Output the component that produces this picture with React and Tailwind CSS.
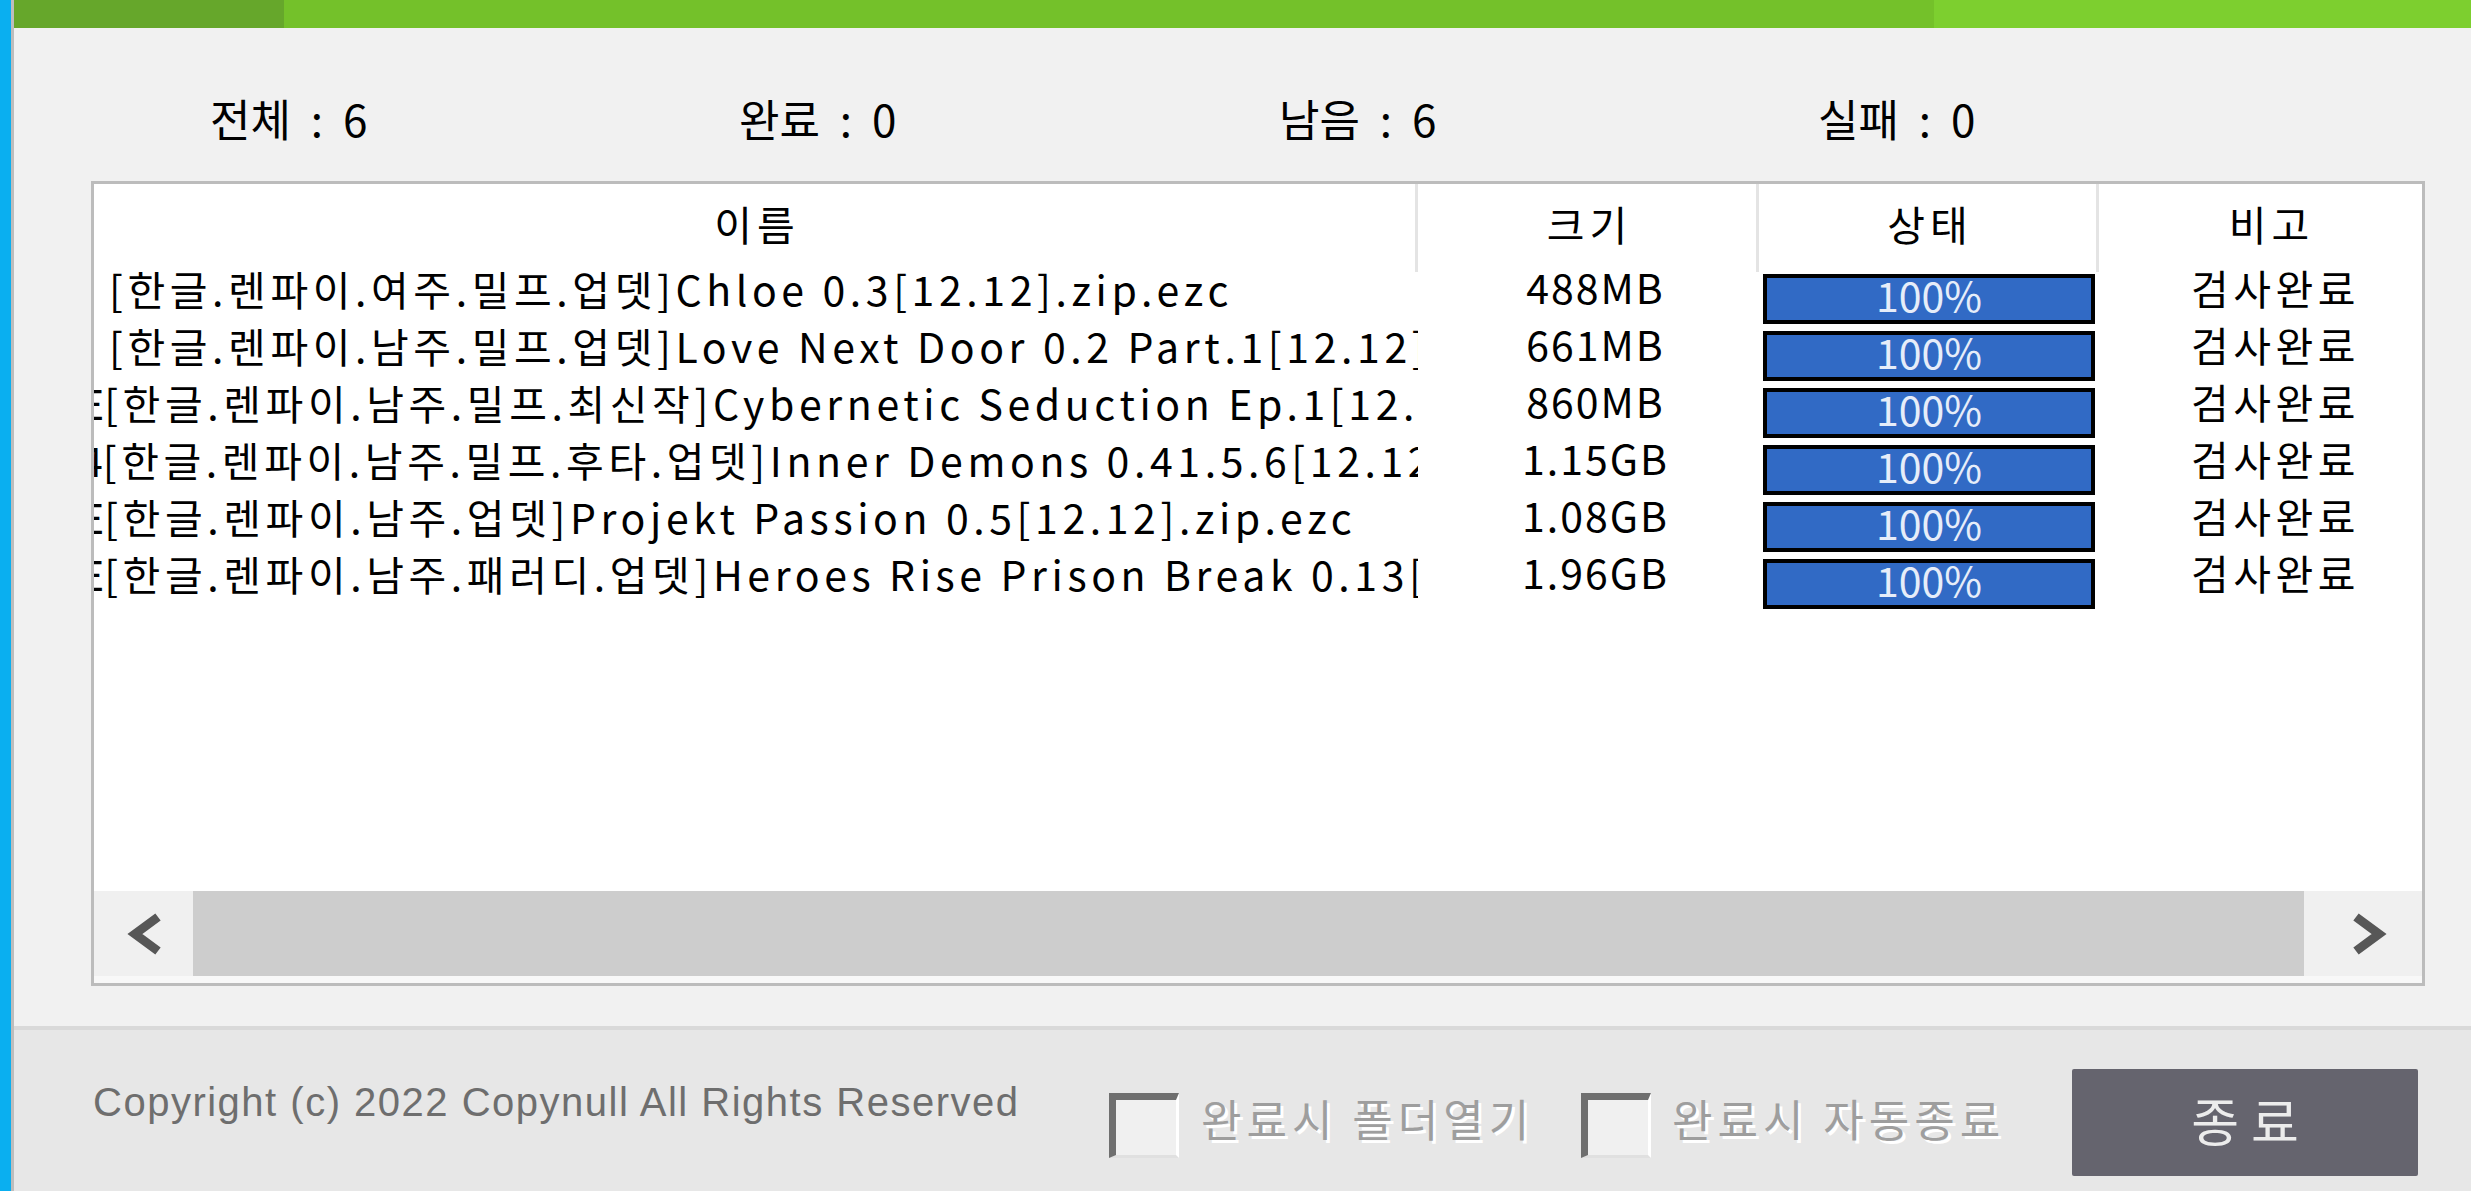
const rows = [
  { pre: "", ml: "ml-[15px]", name: "[한글.렌파이.여주.밀프.업뎃]Chloe 0.3[12.12].zip.ezc", size: "488MB" },
  { pre: "", ml: "ml-[15px]", name: "[한글.렌파이.남주.밀프.업뎃]Love Next Door 0.2 Part.1[12.12].zip.ezc", size: "661MB" },
  { pre: "E", ml: "-ml-[14px]", name: "[한글.렌파이.남주.밀프.최신작]Cybernetic Seduction Ep.1[12.12].zip.ezc", size: "860MB" },
  { pre: "4", ml: "-ml-[14px]", name: "[한글.렌파이.남주.밀프.후타.업뎃]Inner Demons 0.41.5.6[12.12].zip.ezc", size: "1.15GB" },
  { pre: "E", ml: "-ml-[14px]", name: "[한글.렌파이.남주.업뎃]Projekt Passion 0.5[12.12].zip.ezc", size: "1.08GB" },
  { pre: "E", ml: "-ml-[14px]", name: "[한글.렌파이.남주.패러디.업뎃]Heroes Rise Prison Break 0.13[12.12].zip.ezc", size: "1.96GB" },
];

function Chevron({ dir }) {
  return (
    <svg width="34" height="40" viewBox="0 0 34 40" className="overflow-visible">
      <polyline
        points={dir === "left" ? "31,3 8,20 31,37" : "3,3 26,20 3,37"}
        fill="none"
        stroke="#575757"
        strokeWidth="9"
        strokeLinejoin="miter"
      />
    </svg>
  );
}

function Checkbox() {
  return (
    <div className="mt-[63px] w-[70px] h-[65px] shrink-0 bg-[#f0f0f0] border-t-[7px] border-l-[7px] border-r-[3px] border-b-[3px] border-t-[#6f6f6f] border-l-[#6f6f6f] border-r-white border-b-[#e0e0e0]" />
  );
}

export default function App() {
  return (
    <div className="flex w-[2471px] h-[1191px] overflow-hidden bg-[#f1f1f1] text-black font-['Noto_Sans_CJK_KR',sans-serif]">
      <div className="w-[11px] shrink-0 bg-[#0aaff0]" />
      <div className="w-[3px] shrink-0 bg-[#bdbdbd]" />
      <div className="flex-1 flex flex-col min-w-0">
        {/* top green bar */}
        <div className="h-[28px] flex shrink-0">
          <div className="w-[270px] bg-[#66a72b]" />
          <div className="w-[1650px] bg-[#74c12a]" />
          <div className="flex-1 bg-[#7dcf2f]" />
        </div>

        {/* stats */}
        <div className="h-[153px] shrink-0 flex pt-[68px] pl-[196px] text-[44px] leading-[44px] whitespace-nowrap [word-spacing:10px]">
          <div className="w-[529px]">전체 : 6</div>
          <div className="w-[540px]">완료 : 0</div>
          <div className="w-[539px]">남음 : 6</div>
          <div>실패 : 0</div>
        </div>

        {/* table */}
        <div className="ml-[77px] w-[2334px] h-[805px] shrink-0 border-[3px] border-[#bcbcbc] bg-white flex flex-col overflow-hidden">
          <div className="grid grid-cols-[1324px_341px_340px_323px] h-[88px] shrink-0 text-[41px] leading-[78px] text-center tracking-[5px]">
            <div className="border-r-[3px] border-[#e4e4e4] pl-[5px]">이름</div>
            <div className="border-r-[3px] border-[#e4e4e4] pl-[5px]">크기</div>
            <div className="border-r-[3px] border-[#e4e4e4] pl-[5px]">상태</div>
            <div className="pl-[22px]">비고</div>
          </div>
          {rows.map((r, i) => (
            <div key={i} className="grid grid-cols-[1324px_341px_340px_323px] h-[57px] shrink-0 text-[41px]">
              <div className="overflow-hidden pr-[6px]">
                <div className={`${r.ml} flex whitespace-nowrap leading-[33px] tracking-[4.6px]`}>
                  {r.pre ? <span className="tracking-[0px]">{r.pre}</span> : null}
                  <span>{r.name}</span>
                </div>
              </div>
              <div className="pl-[14px] text-center leading-[28px] tracking-[2px] whitespace-nowrap">{r.size}</div>
              <div className="px-[4px] pt-[2px]">
                <div className="h-[50px] border-[4px] border-black bg-[#316ac5] text-center text-[#e6edf9] leading-[33px]">100%</div>
              </div>
              <div className="pl-[30px] text-center leading-[31px] tracking-[4.5px] whitespace-nowrap">검사완료</div>
            </div>
          ))}
          <div className="flex-1" />
          <div className="h-[85px] shrink-0 flex">
            <div className="w-[99px] bg-[#f0f0f0] flex items-center justify-center">
              <Chevron dir="left" />
            </div>
            <div className="flex-1 bg-[#cdcdcd]" />
            <div className="w-[118px] bg-[#f0f0f0] flex items-center justify-center pl-[14px]">
              <Chevron dir="right" />
            </div>
          </div>
          <div className="h-[7px] shrink-0 bg-[#f8f8f8]" />
        </div>

        <div className="h-[40px] shrink-0" />
        <div className="h-[4px] shrink-0 bg-[#d9d9d9]" />

        {/* footer */}
        <div className="flex-1 bg-[#e7e7e7] flex items-start">
          <div className="ml-[79px] w-[1016px] shrink-0 mt-[49px] font-['Liberation_Sans',Arial,sans-serif] text-[40px] leading-[46px] tracking-[1.5px] text-[#6e6e6e] whitespace-nowrap">
            Copyright (c) 2022 Copynull All Rights Reserved
          </div>
          <Checkbox />
          <div className="ml-[22px] w-[380px] shrink-0 mt-[66px] text-[44px] leading-[44px] tracking-[5px] text-[#9e9e9e] whitespace-nowrap [text-shadow:3px_3px_0_#ffffff]">
            완료시 폴더열기
          </div>
          <Checkbox />
          <div className="ml-[21px] w-[400px] shrink-0 mt-[66px] text-[44px] leading-[44px] tracking-[5px] text-[#9e9e9e] whitespace-nowrap [text-shadow:3px_3px_0_#ffffff]">
            완료시 자동종료
          </div>
          <div className="mt-[39px] w-[346px] h-[107px] shrink-0 rounded-[2px] bg-[#65646e] flex items-center justify-center pb-[6px] pl-[12px] text-[52px] leading-[52px] tracking-[12px] text-[#ececec]">
            종료
          </div>
        </div>
      </div>
    </div>
  );
}
